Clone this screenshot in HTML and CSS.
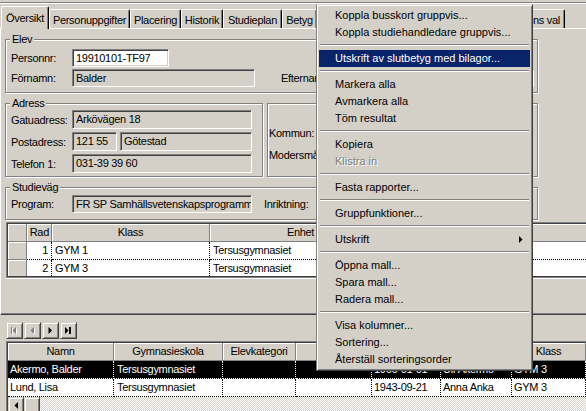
FILE: index.html
```html
<!DOCTYPE html>
<html lang="sv">
<head>
<meta charset="utf-8">
<title>Elev – Översikt</title>
<link rel="stylesheet" href="styles.css">
</head>
<body>
<div class="app">
  <div class="topline"></div>
  <div class="tabstrip">
    <div class="tab selected t-oversikt">Översikt</div>
    <div class="tab t-person">Personuppgifter</div>
    <div class="tab t-plac">Placering</div>
    <div class="tab t-hist">Historik</div>
    <div class="tab t-plan">Studieplan</div>
    <div class="tab t-betyg">Betyg</div>
    <div class="tab t-franvaro"></div>
    <div class="tab t-atg"></div>
    <div class="tab t-kurser"></div>
    <div class="tab t-val">Elevens val</div>
  </div>

  <div class="page">
    <div class="group g-elev">
      <span class="legend">Elev</span>
      <div class="frow first-elev">
        <span class="lbl">Personnr:</span>
        <span class="box white w-pnr">19910101-TF97</span>
      </div>
      <div class="frow gap2">
        <span class="lbl">Förnamn:</span>
        <span class="box w-183">Balder</span>
        <span class="lbl l-efter">Efternamn:</span>
        <span class="box w-183"></span>
      </div>
    </div>

    <div class="addr-row">
      <div class="group g-adress">
        <span class="legend">Adress</span>
        <div class="frow tall">
          <span class="lbl">Gatuadress:</span>
          <span class="box w-180">Arkövägen 18</span>
        </div>
        <div class="frow tall gap3">
          <span class="lbl">Postadress:</span>
          <span class="box w-zip">121 55</span>
          <span class="box w-city">Götestad</span>
        </div>
        <div class="frow tall gap3">
          <span class="lbl">Telefon 1:</span>
          <span class="box w-180">031-39 39 60</span>
        </div>
      </div>
      <div class="group g-kommun">
        <div class="frow tall">
          <span class="lbl l-kommun">Kommun:</span>
          <span class="box w-180"></span>
        </div>
        <div class="frow tall gap3">
          <span class="lbl l-kommun">Modersmål:</span>
          <span class="box w-180"></span>
        </div>
      </div>
    </div>

    <div class="group g-studie">
      <span class="legend">Studieväg</span>
      <div class="frow first-studie">
        <span class="lbl">Program:</span>
        <span class="box w-180">FR SP Samhällsvetenskapsprogramm</span>
        <span class="lbl l-inr">Inriktning:</span>
        <span class="box w-180"></span>
      </div>
    </div>

    <div class="gridframe g1">
      <div class="gridinner">
        <div class="grow hdr">
          <div class="hc c1-rh"></div>
          <div class="hc c1-rad right">Rad</div>
          <div class="hc c1-klass">Klass</div>
          <div class="hc c1-enhet">Enhet</div>
          <div class="hc c1-rest"></div>
        </div>
        <div class="grow">
          <div class="rh c1-rh"></div>
          <div class="dc c1-rad right">1</div>
          <div class="dc c1-klass">GYM 1</div>
          <div class="dc c1-enhet">Tersusgymnasiet</div>
          <div class="dc c1-rest"></div>
        </div>
        <div class="grow">
          <div class="rh c1-rh"></div>
          <div class="dc c1-rad right">2</div>
          <div class="dc c1-klass">GYM 3</div>
          <div class="dc c1-enhet">Tersusgymnasiet</div>
          <div class="dc c1-rest"></div>
        </div>
      </div>
    </div>
  </div>

  <div class="navbar">
    <div class="btn3d navbtn">
      <svg width="8" height="8" viewBox="0 0 8 8"><g fill="#fff" transform="translate(1 1)"><rect x="0" y="0" width="1" height="7"/><path d="M5 0v7L1.5 3.5z"/></g><g fill="#808080"><rect x="0" y="0" width="1" height="7"/><path d="M5 0v7L1.5 3.5z"/></g></svg>
    </div>
    <div class="btn3d navbtn">
      <svg width="6" height="8" viewBox="0 0 6 8"><path fill="#fff" d="M5 1v7L1.5 4.5z"/><path fill="#808080" d="M4 0v7L0.5 3.5z"/></svg>
    </div>
    <div class="btn3d navbtn">
      <svg width="5" height="7" viewBox="0 0 5 7"><path d="M0.5 0v7L4 3.5z"/></svg>
    </div>
    <div class="btn3d navbtn">
      <svg width="7" height="7" viewBox="0 0 7 7"><path d="M0 0v7L3.5 3.5z"/><rect x="4" y="0" width="2" height="7"/></svg>
    </div>
  </div>

  <div class="gridframe g2">
    <div class="gridinner">
      <div class="grow hdr">
        <div class="hc c2-namn">Namn</div>
        <div class="hc c2-skola">Gymnasieskola</div>
        <div class="hc c2-kat">Elevkategori</div>
        <div class="hc c2-prog"></div>
        <div class="hc c2-fdat"></div>
        <div class="hc c2-vh"></div>
        <div class="hc c2-klass">Klass</div>
        <div class="hc c2-rest"></div>
      </div>
      <div class="grow sel">
        <div class="dc c2-namn">Akermo, Balder</div>
        <div class="dc c2-skola">Tersusgymnasiet</div>
        <div class="dc c2-kat"></div>
        <div class="dc c2-prog"></div>
        <div class="dc c2-fdat">1966-01-01</div>
        <div class="dc c2-vh">Ulf Akermo</div>
        <div class="dc c2-klass">GYM 3</div>
        <div class="dc c2-rest"></div>
      </div>
      <div class="grow">
        <div class="dc c2-namn">Lund, Lisa</div>
        <div class="dc c2-skola">Tersusgymnasiet</div>
        <div class="dc c2-kat"></div>
        <div class="dc c2-prog"></div>
        <div class="dc c2-fdat">1943-09-21</div>
        <div class="dc c2-vh">Anna Anka</div>
        <div class="dc c2-klass">GYM 3</div>
        <div class="dc c2-rest"></div>
      </div>
      <div class="hscroll">
        <div class="btn3d sbtn">
          <svg width="4" height="7" viewBox="0 0 4 7"><path d="M4 0v7L0.5 3.5z"/></svg>
        </div>
        <div class="btn3d sbtn"></div>
        <div class="track"></div>
      </div>
    </div>
  </div>

  <div class="menu">
    <div class="mi">Koppla busskort gruppvis...</div>
    <div class="mi">Koppla studiehandledare gruppvis...</div>
    <div class="sep"></div>
    <div class="mi active">Utskrift av slutbetyg med bilagor...</div>
    <div class="sep"></div>
    <div class="mi">Markera alla</div>
    <div class="mi">Avmarkera alla</div>
    <div class="mi">Töm resultat</div>
    <div class="sep"></div>
    <div class="mi">Kopiera</div>
    <div class="mi disabled">Klistra in</div>
    <div class="sep"></div>
    <div class="mi">Fasta rapporter...</div>
    <div class="sep"></div>
    <div class="mi">Gruppfunktioner...</div>
    <div class="sep"></div>
    <div class="mi sub">Utskrift<svg width="4" height="7" viewBox="0 0 4 7"><path d="M0 0v7L3.5 3.5z"/></svg></div>
    <div class="sep"></div>
    <div class="mi">Öppna mall...</div>
    <div class="mi">Spara mall...</div>
    <div class="mi">Radera mall...</div>
    <div class="sep"></div>
    <div class="mi">Visa kolumner...</div>
    <div class="mi">Sortering...</div>
    <div class="mi">Återställ sorteringsorder</div>
  </div>
</div>
</body>
</html>
```

FILE: styles.css
```css
* { box-sizing: border-box; }
html, body { margin: 0; padding: 0; }
body {
  width: 586px;
  height: 411px;
  overflow: hidden;
  background: #d4d0c8;
  font-family: "Liberation Sans", Arial, sans-serif;
  font-size: 11px;
  color: #000;
}
.app {
  position: relative;
  width: 640px;
  padding-top: 2px;
  letter-spacing: -0.3px;
}
.topline {
  height: 2px;
  border-top: 1px solid #808080;
  border-bottom: 1px solid #fff;
}

/* Tabs */
.tabstrip {
  display: flex;
  align-items: flex-end;
  height: 24px;
  position: relative;
  z-index: 1;
}
.tab {
  flex: none;
  height: 19px;
  padding-top: 2px;
  line-height: 16px;
  text-align: center;
  white-space: nowrap;
  border-top: 1px solid #fff;
  border-left: 1px solid #fff;
  border-right: 1px solid #000;
  box-shadow: inset -1px 0 0 #808080;
  border-top-left-radius: 2px;
  border-top-right-radius: 2px;
  background: #d4d0c8;
}
.tab.selected {
  height: 23px;
  margin-bottom: -1px;
  padding-top: 3px;
}
.t-oversikt { width: 48px; margin-left: 1px; }
.t-person { width: 81px; }
.t-plac { width: 51px; }
.t-hist { width: 42px; }
.t-plan { width: 59px; }
.t-betyg { width: 35px; }
.t-franvaro { width: 60px; }
.t-atg { width: 86px; }
.t-kurser { width: 39px; }
.t-val { width: 63px; }

/* Page */
.page {
  height: 287px;
  border-top: 1px solid #fff;
  border-left: 1px solid #fff;
  border-bottom: 1px solid #404040;
  box-shadow: inset 0 -1px 0 #808080;
  padding: 10px 0 0 4px;
}

.group {
  border: 1px solid #808080;
  box-shadow: 1px 1px 0 #fff, inset 1px 1px 0 #fff;
  padding-left: 5px;
}
.legend {
  display: block;
  width: max-content;
  margin: -7px 0 0 -1px;
  padding: 0 2px;
  line-height: 13px;
  background: #d4d0c8;
}

.frow {
  display: flex;
  align-items: center;
  height: 18px;
}
.frow.tall { height: 19px; }
.gap2 { margin-top: 2px; }
.gap3 { margin-top: 3px; }
.lbl {
  flex: none;
  width: 61px;
  white-space: nowrap;
}
.l-efter { width: 70px; margin-left: 26px; }
.l-kommun { width: 60px; }
.l-inr { width: 60px; margin-left: 12px; }

.box {
  flex: none;
  display: block;
  height: 100%;
  line-height: 16px;
  border: 1px solid;
  border-color: #808080 #fff #fff #808080;
  box-shadow: inset 1px 1px 0 #404040, inset -1px -1px 0 #d4d0c8;
  padding: 0 3px;
  background: #d4d0c8;
  white-space: nowrap;
  overflow: hidden;
}
.frow.tall .box { line-height: 17px; }
.box.white { background: #fff; }
.w-pnr { width: 97px; }
.w-183 { width: 183px; }
.w-180 { width: 180px; }
.w-zip { width: 45px; }
.w-city { width: 132px; margin-left: 3px; }

.g-elev { width: 533px; padding-bottom: 5px; }
.first-elev { margin-top: 3px; }

.addr-row {
  display: flex;
  gap: 4px;
  margin-top: 10px;
}
.g-adress { width: 258px; padding-bottom: 3px; }
.g-kommun { width: 271px; padding: 19px 0 0 1px; }

.g-studie { width: 533px; margin-top: 10px; padding-bottom: 6px; }
.first-studie { margin-top: 1px; }

/* Grids */
.gridframe {
  border: 1px solid;
  border-color: #808080 #fff #808080 #808080;
  overflow: hidden;
}
.gridinner {
  height: 100%;
  border: 1px solid;
  border-color: #404040 #d4d0c8 #404040 #404040;
  overflow: hidden;
  background: #d4d0c8;
}
.g1 {
  width: 620px;
  height: 56px;
  margin: 2px 0 0 1px;
  box-shadow: 0 1px 0 #fff;
}
.grow {
  display: flex;
  height: 18px;
  background: #fff;
}
.grow.hdr { background: #d4d0c8; }
.hc, .dc, .rh {
  flex: none;
  height: 18px;
  line-height: 17px;
  white-space: nowrap;
  overflow: hidden;
}
.hc {
  text-align: center;
  background: #d4d0c8;
  border-right: 1px solid #808080;
  border-bottom: 1px solid #808080;
  box-shadow: inset 1px 1px 0 #fff;
  padding: 0 2px;
}
.rh {
  background: #d4d0c8;
  border-right: 1px solid #808080;
  border-bottom: 1px solid #808080;
  box-shadow: inset 1px 1px 0 #fff;
}
.dc {
  border-right: 1px dotted #000;
  border-bottom: 1px dotted #000;
  padding: 0 3px;
}
.right { text-align: right; }
.hc.right { padding-right: 2px; }

.c1-rh { width: 19px; }
.c1-rad { width: 25px; }
.c1-klass { width: 158px; }
.c1-enhet { width: 182px; }
.c1-rest { width: 230px; }

/* Navigation */
.navbar {
  display: flex;
  gap: 1px;
  margin: 7px 0 0 6px;
}
.btn3d {
  flex: none;
  display: flex;
  align-items: center;
  justify-content: center;
  border: 1px solid;
  border-color: #d4d0c8 #404040 #404040 #d4d0c8;
  box-shadow: inset 1px 1px 0 #fff, inset -1px -1px 0 #808080;
  background: #d4d0c8;
}
.navbtn { width: 17px; height: 17px; }
.navbtn svg { display: block; }

.g2 {
  width: 620px;
  height: 80px;
  margin: 2px 0 0 6px;
  border-bottom: 0;
}
.g2 .gridinner { border-bottom: 0; }
.c2-namn { width: 106px; padding-left: 2px; }
.c2-skola { width: 109px; }
.c2-kat { width: 73px; }
.c2-prog { width: 76px; }
.c2-fdat { width: 69px; padding-left: 2px; }
.c2-vh { width: 71px; padding-left: 2px; }
.c2-klass { width: 74px; padding-left: 2px; }
.c2-rest { width: 60px; }
.grow.sel { background: #000; color: #fff; }
.grow.sel .dc { border-color: #fff; }

.hscroll {
  display: flex;
  height: 16px;
}
.sbtn { width: 16px; height: 16px; }
.track {
  flex: 1;
  background: repeating-conic-gradient(#fff 0 25%, #d4d0c8 0 50%) 0 0 / 2px 2px;
}

/* Context menu */
.menu {
  position: absolute;
  left: 316px;
  top: 4px;
  width: 217px;
  padding: 2px;
  background: #d4d0c8;
  border: 1px solid;
  border-color: #d4d0c8 #404040 #404040 #808080;
  box-shadow: inset 1px 1px 0 #fff, inset -1px -1px 0 #808080;
  letter-spacing: 0;
  z-index: 5;
}
.mi {
  height: 17px;
  line-height: 17px;
  padding-left: 16px;
  white-space: nowrap;
}
.mi.active { background: #0a246a; color: #fff; }
.mi.disabled { color: #808080; text-shadow: 1px 1px 0 #fff; }
.mi.sub {
  display: flex;
  align-items: center;
  justify-content: space-between;
  padding-right: 7px;
}
.sep {
  margin: 3px 1px 4px;
  border-top: 1px solid #808080;
  border-bottom: 1px solid #fff;
}
```
